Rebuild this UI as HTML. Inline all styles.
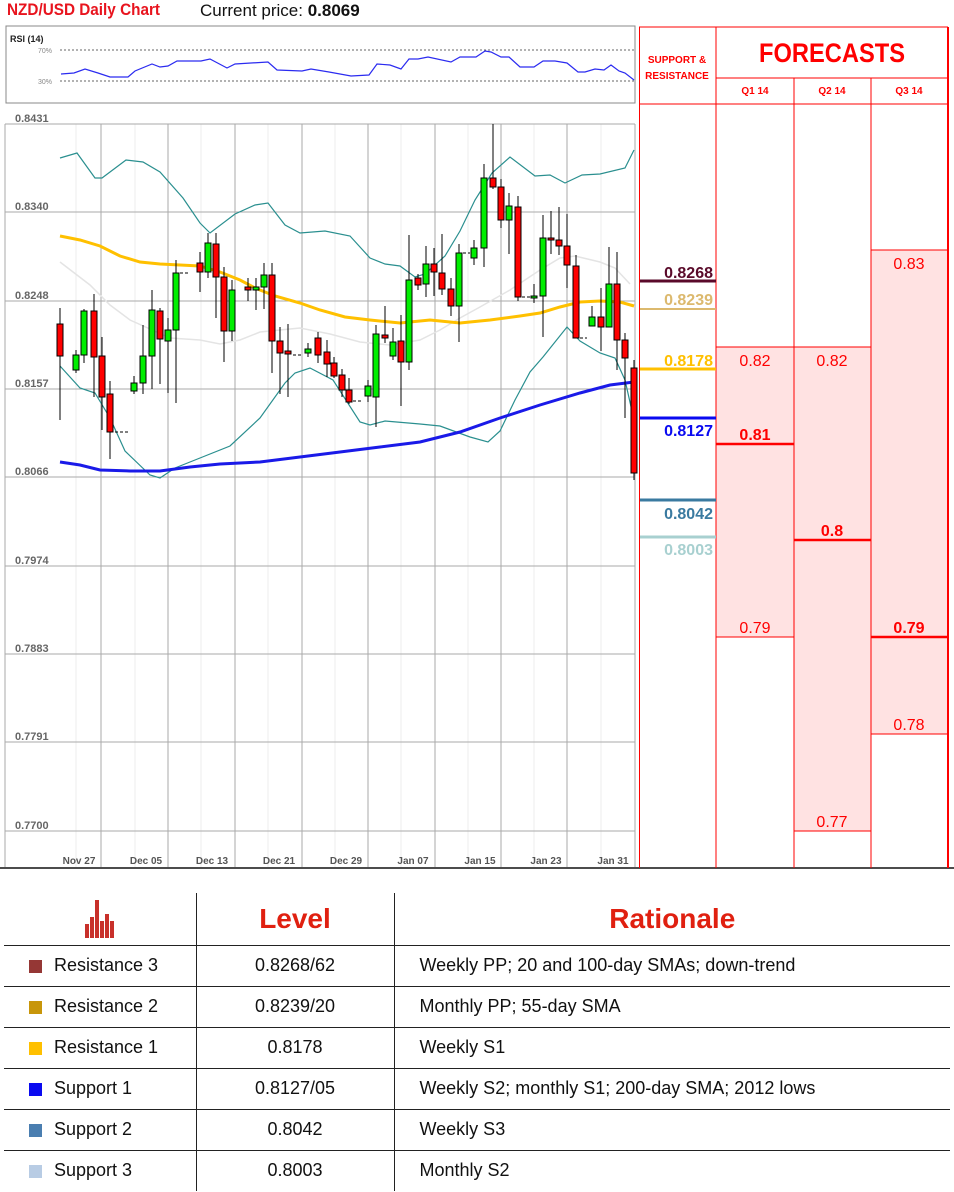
<!DOCTYPE html>
<html><head><meta charset="utf-8"><style>
body{margin:0;width:954px;height:1192px;background:#fff;font-family:"Liberation Sans",sans-serif;position:relative;overflow:hidden}
.t{position:absolute;white-space:nowrap}
table{position:absolute;left:4px;top:893px;border-collapse:collapse;table-layout:fixed;width:946px;font-size:18px;color:#111}
td,th{box-sizing:border-box}
td{height:41px;border-bottom:1.5px solid #222;padding:0;white-space:nowrap}
td.a{border-right:1px solid #222;padding-left:50px;position:relative}
td.b{border-right:1px solid #222;text-align:center}
td.c{padding-left:25px}
.sq{position:absolute;left:25px;top:14px;width:13px;height:13px}
th{height:52px;border-bottom:1.5px solid #222;font-size:28px;color:#e02010;font-weight:bold;padding:0}
</style></head><body>
<div class="t" style="left:7px;top:0;font-size:17px;color:#e8141e;font-weight:bold;transform:scaleX(.9);transform-origin:left">NZD/USD Daily Chart</div>
<div class="t" style="left:200px;top:1px;font-size:17px;color:#111">Current price: <b>0.8069</b></div>
<svg width="954" height="870" style="position:absolute;left:0;top:0" font-family="Liberation Sans">
<rect x="6" y="26" width="629" height="77" fill="#fff" stroke="#888"/>
<text x="10" y="42" font-size="9" font-weight="bold" fill="#222">RSI (14)</text>
<text x="38" y="53" font-size="7" fill="#888">70%</text><text x="38" y="84" font-size="7" fill="#888">30%</text>
<line x1="60" y1="50" x2="635" y2="50" stroke="#666" stroke-dasharray="2,2"/>
<line x1="60" y1="81" x2="635" y2="81" stroke="#666" stroke-dasharray="2,2"/>
<polyline fill="none" stroke="#2b2bf0" stroke-width="1.2" points="61,74 74,73 85,69 98,73 110,77 128,77 135,71 152,64 160,67 168,66 177,61 201,61 210,59 227,68 235,64 268,62 277,70 302,71 311,69 329,72 351,76 369,75 377,64 390,65 401,69 409,59 418,59 428,57 451,62 460,57 476,57 485,51 491,52 501,57 509,57 520,67 534,67 543,61 555,61 567,63 578,72 585,72 595,69 604,70 611,65 619,71 625,73 634,80"/>
<g stroke="#eee">
<line x1="76" y1="124" x2="76" y2="867"/><line x1="135" y1="124" x2="135" y2="867"/><line x1="201" y1="124" x2="201" y2="867"/><line x1="268" y1="124" x2="268" y2="867"/><line x1="335" y1="124" x2="335" y2="867"/><line x1="401" y1="124" x2="401" y2="867"/><line x1="468" y1="124" x2="468" y2="867"/><line x1="534" y1="124" x2="534" y2="867"/><line x1="601" y1="124" x2="601" y2="867"/>
</g>
<g stroke="#aaa">
<line x1="5" y1="124" x2="635" y2="124"/><line x1="5" y1="212" x2="635" y2="212"/><line x1="5" y1="301" x2="635" y2="301"/><line x1="5" y1="389" x2="635" y2="389"/><line x1="5" y1="477" x2="635" y2="477"/><line x1="5" y1="566" x2="635" y2="566"/><line x1="5" y1="654" x2="635" y2="654"/><line x1="5" y1="742" x2="635" y2="742"/><line x1="5" y1="831" x2="635" y2="831"/>
<line x1="101" y1="124" x2="101" y2="867"/><line x1="168" y1="124" x2="168" y2="867"/><line x1="235" y1="124" x2="235" y2="867"/><line x1="302" y1="124" x2="302" y2="867"/><line x1="368" y1="124" x2="368" y2="867"/><line x1="435" y1="124" x2="435" y2="867"/><line x1="501" y1="124" x2="501" y2="867"/><line x1="567" y1="124" x2="567" y2="867"/><line x1="635" y1="124" x2="635" y2="867"/>
<line x1="5" y1="124" x2="5" y2="867"/>
</g>
<g font-size="11" fill="#666" font-weight="bold">
<text x="15" y="122">0.8431</text><text x="15" y="210">0.8340</text><text x="15" y="299">0.8248</text><text x="15" y="387">0.8157</text><text x="15" y="475">0.8066</text><text x="15" y="564">0.7974</text><text x="15" y="652">0.7883</text><text x="15" y="740">0.7791</text><text x="15" y="829">0.7700</text>
</g>
<g font-size="10" fill="#555" font-weight="bold" text-anchor="middle">
<text x="79" y="864">Nov 27</text><text x="146" y="864">Dec 05</text><text x="212" y="864">Dec 13</text><text x="279" y="864">Dec 21</text><text x="346" y="864">Dec 29</text><text x="413" y="864">Jan 07</text><text x="480" y="864">Jan 15</text><text x="546" y="864">Jan 23</text><text x="613" y="864">Jan 31</text>
</g>
<line x1="0" y1="868" x2="954" y2="868" stroke="#111" stroke-width="1.5"/>
<polyline fill="none" stroke="#e4e4e4" stroke-width="1.5" points="60,262 90,285 110,305 130,320 150,329 170,338 200,340 220,344 240,340 260,332 280,330 300,328 330,334 360,342 390,345 420,340 440,330 460,318 480,307 510,290 540,270 560,258 575,256 600,262 615,268 630,284"/>
<polyline fill="none" stroke="#2a8f8f" stroke-width="1.2" points="60,158 77,153 95,178 102,178 126,160 143,162 160,172 183,198 200,223 210,233 235,214 255,205 268,203 285,225 300,233 325,231 350,236 370,258 385,264 400,266 415,277 425,274 445,256 460,231 475,200 492,173 510,157 535,176 550,175 565,183 582,175 600,174 625,168 634,150"/>
<polyline fill="none" stroke="#2a8f8f" stroke-width="1.2" points="60,366 80,388 95,393 110,418 125,451 150,475 160,478 175,468 200,458 230,446 260,418 285,383 295,373 310,368 333,380 360,422 370,425 385,421 420,424 440,426 470,437 488,442 500,431 515,400 530,372 543,357 567,327 580,341 600,353 615,358 625,380 634,420"/>
<polyline fill="none" stroke="#ffc000" stroke-width="3" points="60,236 80,240 100,246 120,256 140,262 160,264 180,265 200,266 220,272 240,280 255,288 275,296 300,303 320,310 345,317 370,320 400,323 430,320 460,323 490,320 520,316 540,313 560,307 580,302 600,301 620,302 634,306"/>
<polyline fill="none" stroke="#1a1ae8" stroke-width="3" points="60,462 80,465 100,470 130,471 160,471 190,467 220,464 260,462 300,457 340,452 380,447 420,442 460,432 500,418 540,405 580,393 610,385 634,382"/>
<g stroke="#000" stroke-width="1">
<line x1="60" y1="308" x2="60" y2="420"/><rect x="57" y="324" width="6" height="32" fill="#f00"/>
<line x1="76" y1="350" x2="76" y2="373"/><rect x="73" y="355" width="6" height="15" fill="#0e0"/>
<line x1="84" y1="309" x2="84" y2="363"/><rect x="81" y="311" width="6" height="44" fill="#0e0"/>
<line x1="94" y1="294" x2="94" y2="397"/><rect x="91" y="311" width="6" height="46" fill="#f00"/>
<line x1="102" y1="337" x2="102" y2="430"/><rect x="99" y="356" width="6" height="41" fill="#f00"/>
<line x1="110" y1="381" x2="110" y2="459"/><rect x="107" y="394" width="6" height="38" fill="#f00"/>
<line x1="115" y1="432" x2="128" y2="432" stroke-dasharray="3,2"/>
<line x1="134" y1="376" x2="134" y2="394"/><rect x="131" y="383" width="6" height="8" fill="#0e0"/>
<line x1="143" y1="325" x2="143" y2="394"/><rect x="140" y="356" width="6" height="27" fill="#0e0"/>
<line x1="152" y1="290" x2="152" y2="389"/><rect x="149" y="310" width="6" height="46" fill="#0e0"/>
<line x1="160" y1="308" x2="160" y2="384"/><rect x="157" y="311" width="6" height="28" fill="#f00"/>
<line x1="168" y1="318" x2="168" y2="393"/><rect x="165" y="330" width="6" height="11" fill="#0e0"/>
<line x1="176" y1="260" x2="176" y2="403"/><rect x="173" y="273" width="6" height="57" fill="#0e0"/>
<line x1="180" y1="273" x2="190" y2="273" stroke-dasharray="3,2"/>
<line x1="200" y1="252" x2="200" y2="292"/><rect x="197" y="263" width="6" height="9" fill="#f00"/>
<line x1="208" y1="233" x2="208" y2="278"/><rect x="205" y="243" width="6" height="29" fill="#0e0"/>
<line x1="216" y1="233" x2="216" y2="318"/><rect x="213" y="244" width="6" height="33" fill="#f00"/>
<line x1="224" y1="267" x2="224" y2="362"/><rect x="221" y="277" width="6" height="54" fill="#f00"/>
<line x1="232" y1="280" x2="232" y2="341"/><rect x="229" y="290" width="6" height="41" fill="#0e0"/>
<line x1="248" y1="278" x2="248" y2="301"/><rect x="245" y="287" width="6" height="3" fill="#f00"/>
<line x1="256" y1="278" x2="256" y2="310"/><rect x="253" y="287" width="6" height="3" fill="#0e0"/>
<line x1="264" y1="263" x2="264" y2="309"/><rect x="261" y="275" width="6" height="12" fill="#0e0"/>
<line x1="272" y1="263" x2="272" y2="373"/><rect x="269" y="275" width="6" height="66" fill="#f00"/>
<line x1="280" y1="327" x2="280" y2="394"/><rect x="277" y="341" width="6" height="12" fill="#f00"/>
<line x1="288" y1="324" x2="288" y2="397"/><rect x="285" y="351" width="6" height="3" fill="#f00"/>
<line x1="293" y1="355" x2="302" y2="355" stroke-dasharray="3,2"/>
<line x1="308" y1="343" x2="308" y2="357"/><rect x="305" y="349" width="6" height="4" fill="#0e0"/>
<line x1="318" y1="332" x2="318" y2="363"/><rect x="315" y="338" width="6" height="17" fill="#f00"/>
<line x1="327" y1="340" x2="327" y2="377"/><rect x="324" y="352" width="6" height="12" fill="#f00"/>
<line x1="334" y1="357" x2="334" y2="378"/><rect x="331" y="363" width="6" height="13" fill="#f00"/>
<line x1="342" y1="369" x2="342" y2="397"/><rect x="339" y="375" width="6" height="15" fill="#f00"/>
<line x1="349" y1="378" x2="349" y2="404"/><rect x="346" y="390" width="6" height="12" fill="#f00"/>
<line x1="353" y1="401" x2="362" y2="401" stroke-dasharray="3,2"/>
<line x1="368" y1="380" x2="368" y2="402"/><rect x="365" y="386" width="6" height="10" fill="#0e0"/>
<line x1="376" y1="325" x2="376" y2="427"/><rect x="373" y="334" width="6" height="63" fill="#0e0"/>
<line x1="385" y1="306" x2="385" y2="343"/><rect x="382" y="335" width="6" height="3" fill="#f00"/>
<line x1="393" y1="328" x2="393" y2="360"/><rect x="390" y="342" width="6" height="14" fill="#0e0"/>
<line x1="401" y1="315" x2="401" y2="406"/><rect x="398" y="341" width="6" height="21" fill="#f00"/>
<line x1="409" y1="235" x2="409" y2="370"/><rect x="406" y="280" width="6" height="82" fill="#0e0"/>
<line x1="418" y1="274" x2="418" y2="290"/><rect x="415" y="278" width="6" height="7" fill="#f00"/>
<line x1="426" y1="246" x2="426" y2="297"/><rect x="423" y="264" width="6" height="20" fill="#0e0"/>
<line x1="434" y1="248" x2="434" y2="296"/><rect x="431" y="264" width="6" height="8" fill="#f00"/>
<line x1="442" y1="234" x2="442" y2="295"/><rect x="439" y="273" width="6" height="16" fill="#f00"/>
<line x1="451" y1="278" x2="451" y2="316"/><rect x="448" y="289" width="6" height="17" fill="#f00"/>
<line x1="459" y1="244" x2="459" y2="342"/><rect x="456" y="253" width="6" height="53" fill="#0e0"/>
<line x1="463" y1="253" x2="470" y2="253" stroke-dasharray="3,2"/>
<line x1="474" y1="240" x2="474" y2="265"/><rect x="471" y="248" width="6" height="10" fill="#0e0"/>
<line x1="484" y1="164" x2="484" y2="267"/><rect x="481" y="178" width="6" height="70" fill="#0e0"/>
<line x1="493" y1="124" x2="493" y2="189"/><rect x="490" y="178" width="6" height="9" fill="#f00"/>
<line x1="501" y1="179" x2="501" y2="228"/><rect x="498" y="187" width="6" height="33" fill="#f00"/>
<line x1="509" y1="193" x2="509" y2="254"/><rect x="506" y="206" width="6" height="14" fill="#0e0"/>
<line x1="518" y1="196" x2="518" y2="301"/><rect x="515" y="207" width="6" height="90" fill="#f00"/>
<line x1="522" y1="297" x2="531" y2="297" stroke-dasharray="3,2"/>
<line x1="534" y1="284" x2="534" y2="303"/><rect x="531" y="296" width="6" height="2" fill="#0e0"/>
<line x1="543" y1="215" x2="543" y2="337"/><rect x="540" y="238" width="6" height="58" fill="#0e0"/>
<line x1="551" y1="211" x2="551" y2="254"/><rect x="548" y="238" width="6" height="2" fill="#f00"/>
<line x1="559" y1="207" x2="559" y2="255"/><rect x="556" y="240" width="6" height="6" fill="#f00"/>
<line x1="567" y1="214" x2="567" y2="288"/><rect x="564" y="246" width="6" height="19" fill="#f00"/>
<line x1="576" y1="255" x2="576" y2="338"/><rect x="573" y="266" width="6" height="72" fill="#f00"/>
<line x1="580" y1="338" x2="587" y2="338" stroke-dasharray="3,2"/>
<line x1="592" y1="306" x2="592" y2="326"/><rect x="589" y="317" width="6" height="9" fill="#0e0"/>
<line x1="601" y1="288" x2="601" y2="351"/><rect x="598" y="317" width="6" height="10" fill="#f00"/>
<line x1="609" y1="247" x2="609" y2="327"/><rect x="606" y="284" width="6" height="43" fill="#0e0"/>
<line x1="617" y1="252" x2="617" y2="370"/><rect x="614" y="284" width="6" height="56" fill="#f00"/>
<line x1="625" y1="333" x2="625" y2="418"/><rect x="622" y="340" width="6" height="18" fill="#f00"/>
<line x1="634" y1="360" x2="634" y2="480"/><rect x="631" y="368" width="6" height="105" fill="#f00"/>
</g>
<rect x="716" y="347" width="78" height="290" fill="#ffe2e2"/>
<rect x="794" y="347" width="77" height="484" fill="#ffe2e2"/>
<rect x="871" y="250" width="77" height="484" fill="#ffe2e2"/>
<g stroke="#f00" stroke-width="1">
<line x1="639.5" y1="27" x2="639.5" y2="868"/><line x1="716" y1="27" x2="716" y2="868"/><line x1="794" y1="78" x2="794" y2="868"/><line x1="871" y1="78" x2="871" y2="868"/>
<line x1="948" y1="27" x2="948" y2="868" stroke-width="2"/>
<line x1="639" y1="27" x2="948" y2="27"/><line x1="716" y1="78" x2="948" y2="78"/><line x1="639" y1="104" x2="948" y2="104"/>
<line x1="716" y1="347" x2="871" y2="347"/><line x1="716" y1="637" x2="794" y2="637"/><line x1="794" y1="831" x2="871" y2="831"/><line x1="871" y1="250" x2="948" y2="250"/><line x1="871" y1="734" x2="948" y2="734"/>
<line x1="716" y1="444" x2="794" y2="444" stroke-width="2.5"/><line x1="794" y1="540" x2="871" y2="540" stroke-width="2.5"/><line x1="871" y1="637" x2="948" y2="637" stroke-width="2.5"/>
</g>
<text x="832" y="62" font-size="27" font-weight="bold" fill="#f00" text-anchor="middle" textLength="146" lengthAdjust="spacingAndGlyphs">FORECASTS</text>
<g font-size="10" font-weight="bold" fill="#f00" text-anchor="middle">
<text x="677" y="63">SUPPORT &amp;</text><text x="677" y="79">RESISTANCE</text>
<text x="755" y="94">Q1 14</text><text x="832" y="94">Q2 14</text><text x="909" y="94">Q3 14</text>
</g>
<g font-size="16" fill="#f00" text-anchor="middle">
<text x="755" y="366">0.82</text><text x="832" y="366">0.82</text><text x="909" y="269">0.83</text>
<text x="755" y="633">0.79</text><text x="832" y="827">0.77</text><text x="909" y="730">0.78</text>
<g font-weight="bold"><text x="755" y="440">0.81</text><text x="832" y="536">0.8</text><text x="909" y="633">0.79</text></g>
</g>
<g stroke-width="3">
<line x1="640" y1="281" x2="716" y2="281" stroke="#5a0a2a"/>
<line x1="640" y1="309" x2="716" y2="309" stroke="#dcb96e" stroke-width="2"/>
<line x1="640" y1="369" x2="716" y2="369" stroke="#ffc000"/>
<line x1="640" y1="418" x2="716" y2="418" stroke="#0a0af0"/>
<line x1="640" y1="500" x2="716" y2="500" stroke="#3a7aa0"/>
<line x1="640" y1="537" x2="716" y2="537" stroke="#a8d0d0"/>
</g>
<g font-size="16" font-weight="bold" text-anchor="end">
<text x="713" y="278" fill="#5a0a2a">0.8268</text>
<text x="713" y="305" fill="#dcb96e">0.8239</text>
<text x="713" y="366" fill="#ffc000">0.8178</text>
<text x="713" y="436" fill="#0a0af0">0.8127</text>
<text x="713" y="519" fill="#3a7aa0">0.8042</text>
<text x="713" y="555" fill="#a8d0d0">0.8003</text>
</g>
</svg>
<svg width="40" height="40" style="position:absolute;left:82px;top:900px">
<g fill="#c8302a"><rect x="3" y="24" width="4" height="14"/><rect x="8" y="17" width="4" height="21"/><rect x="13" y="0" width="4" height="38"/><rect x="18" y="21" width="4" height="17"/><rect x="23" y="14" width="4" height="24"/><rect x="28" y="21" width="4" height="17"/></g>
</svg>
<table>
<colgroup><col style="width:192px"><col style="width:198px"><col></colgroup>
<tr><th style="border-right:1px solid #222"></th><th style="border-right:1px solid #222">Level</th><th>Rationale</th></tr>
<tr><td class="a"><span class="sq" style="background:#953735"></span>Resistance 3</td><td class="b">0.8268/62</td><td class="c">Weekly PP; 20 and 100-day SMAs; down-trend</td></tr>
<tr><td class="a"><span class="sq" style="background:#c8960a"></span>Resistance 2</td><td class="b">0.8239/20</td><td class="c">Monthly PP; 55-day SMA</td></tr>
<tr><td class="a"><span class="sq" style="background:#ffc000"></span>Resistance 1</td><td class="b">0.8178</td><td class="c">Weekly S1</td></tr>
<tr><td class="a"><span class="sq" style="background:#0a0af0"></span>Support 1</td><td class="b">0.8127/05</td><td class="c">Weekly S2; monthly S1; 200-day SMA; 2012 lows</td></tr>
<tr><td class="a"><span class="sq" style="background:#4a7eb0"></span>Support 2</td><td class="b">0.8042</td><td class="c">Weekly S3</td></tr>
<tr><td class="a" style="border-bottom:none"><span class="sq" style="background:#b8cce4"></span>Support 3</td><td class="b" style="border-bottom:none">0.8003</td><td class="c" style="border-bottom:none">Monthly S2</td></tr>
</table>
</body></html>
